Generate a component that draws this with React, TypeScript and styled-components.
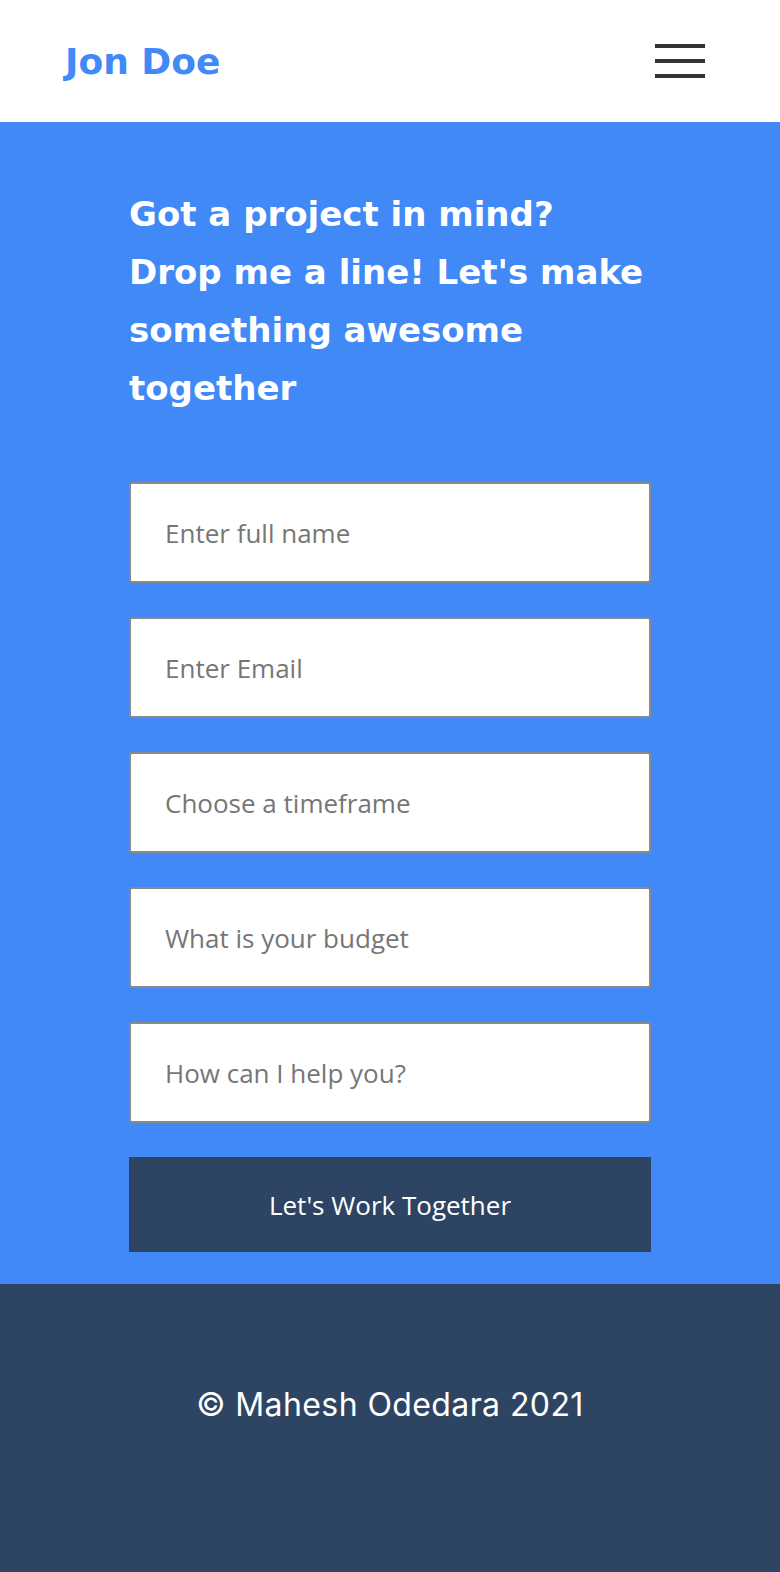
import React from 'react';
import styled, { createGlobalStyle } from 'styled-components';

const GlobalStyle = createGlobalStyle`
  * {
    box-sizing: border-box;
  }

  body {
    margin: 0;
    font-family: 'DejaVu Sans', 'Liberation Sans', sans-serif;
    background: #2e4463;
  }
`;

const Header = styled.header`
  height: 122px;
  background: #ffffff;
  display: flex;
  align-items: center;
  justify-content: space-between;
  padding: 0 75px 0 65px;
`;

const Logo = styled.a`
  font-family: 'DejaVu Sans', sans-serif;
  font-weight: 700;
  font-size: 36px;
  color: #4189f6;
  text-decoration: none;
`;

const Burger = styled.button`
  width: 50px;
  height: 34px;
  padding: 0;
  border: none;
  background: none;
  display: flex;
  flex-direction: column;
  justify-content: space-between;
  cursor: pointer;
`;

const BurgerLine = styled.span`
  display: block;
  width: 100%;
  height: 4px;
  background: #333333;
`;

const ContactSection = styled.section`
  background: #4189f6;
  padding: 63px 0 32px;
`;

const Container = styled.div`
  width: 522px;
  margin: 0 auto;
`;

const Heading = styled.h2`
  margin: 0 0 65px;
  font-family: 'DejaVu Sans', sans-serif;
  font-weight: 700;
  font-size: 34px;
  line-height: 58px;
  color: #ffffff;
`;

const Form = styled.form`
  display: flex;
  flex-direction: column;
  gap: 34px;
`;

const Field = styled.input`
  height: 101px;
  width: 100%;
  padding: 0 34px;
  border: 2px solid #8a8a8a;
  border-radius: 3px;
  background: #ffffff;
  font-family: 'Open Sans', sans-serif;
  font-size: 26px;
  color: #333333;
  outline: none;

  &::placeholder {
    color: #767676;
  }
`;

const SubmitButton = styled.button`
  height: 95px;
  width: 100%;
  border: none;
  background: #2e4463;
  color: #ffffff;
  font-family: 'Open Sans', sans-serif;
  font-size: 26px;
  cursor: pointer;
`;

const Footer = styled.footer`
  background: #2e4463;
  height: 288px;
  padding-top: 97px;
  text-align: center;
`;

const Copyright = styled.p`
  margin: 0;
  font-family: 'Inter', sans-serif;
  font-weight: 400;
  font-size: 32px;
  line-height: 48px;
  letter-spacing: 0.4px;
  color: #ffffff;
`;

const fields = [
  { type: 'text', placeholder: 'Enter full name' },
  { type: 'email', placeholder: 'Enter Email' },
  { type: 'text', placeholder: 'Choose a timeframe' },
  { type: 'text', placeholder: 'What is your budget' },
  { type: 'text', placeholder: 'How can I help you?' },
];

export default function App() {
  return (
    <>
      <GlobalStyle />
      <Header>
        <Logo href="#">Jon Doe</Logo>
        <Burger aria-label="Menu">
          <BurgerLine />
          <BurgerLine />
          <BurgerLine />
        </Burger>
      </Header>
      <ContactSection>
        <Container>
          <Heading>
            Got a project in mind? Drop me a line! Let's make something awesome together
          </Heading>
          <Form onSubmit={(e) => e.preventDefault()}>
            {fields.map((field) => (
              <Field key={field.placeholder} type={field.type} placeholder={field.placeholder} />
            ))}
            <SubmitButton type="submit">Let's Work Together</SubmitButton>
          </Form>
        </Container>
      </ContactSection>
      <Footer>
        <Copyright>© Mahesh Odedara 2021</Copyright>
      </Footer>
    </>
  );
}
